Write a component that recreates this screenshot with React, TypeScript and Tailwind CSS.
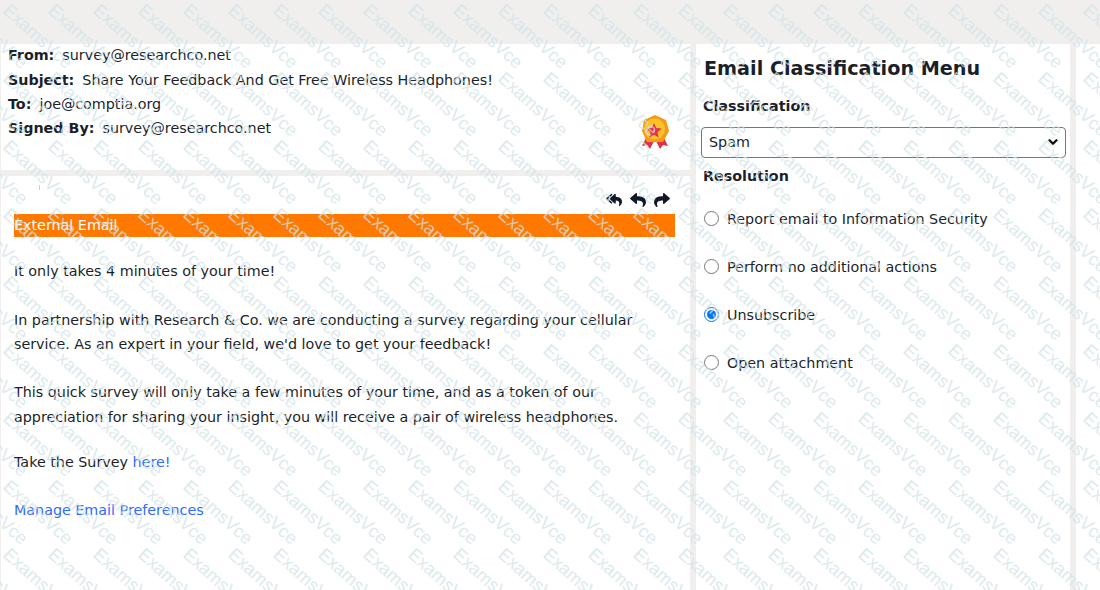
import { FaReply, FaReplyAll, FaShare } from 'react-icons/fa';
import { ChevronDown } from 'lucide-react';

const headers = [
  { label: 'From:', value: 'survey@researchco.net' },
  { label: 'Subject:', value: 'Share Your Feedback And Get Free Wireless Headphones!' },
  { label: 'To:', value: 'joe@comptia.org' },
  { label: 'Signed By:', value: 'survey@researchco.net' },
];

const options = [
  { label: 'Report email to Information Security', checked: false },
  { label: 'Perform no additional actions', checked: false },
  { label: 'Unsubscribe', checked: true },
  { label: 'Open attachment', checked: false },
];

const Medal = () => (
  <svg width="28" height="34" viewBox="0 0 28 34" className="shrink-0">
    <path d="M5 23 L1 31 L6 30 L9 34 L13 26 Z" fill="#e0314b" />
    <path d="M23 23 L27 31 L22 30 L19 34 L15 26 Z" fill="#e0314b" />
    <path d="M14 0 L25 5 L28 16 L22 27 L6 27 L1 16 L3 5 Z" fill="#f59a16" />
    <circle cx="13.5" cy="14" r="10.5" fill="#fdc22a" />
    <path
      d="M13 8 L15.2 13.1 L20.7 13.6 L16.5 17.2 L17.8 22.6 L13 19.8 L8.2 22.6 L9.5 17.2 L5.3 13.6 L10.8 13.1 Z"
      fill="#e8304a"
    />
  </svg>
);

// repeated diagonal stamp that lies over the whole page
const Watermark = () => {
  const marks = [];
  for (let row = 0; row < 11; row++) {
    for (let col = 0; col < 28; col++) {
      const x = col * 45 - 43;
      const y = row * 68 - 56;
      marks.push(
        <text key={`${row}-${col}`} x={x} y={y} transform={`rotate(42 ${x} ${y})`}>
          ExamsVce
        </text>,
      );
    }
  }
  return (
    <svg
      width="1100"
      height="590"
      className="absolute inset-0 pointer-events-none fill-[#d2e3e8] opacity-75 font-['Liberation_Sans',sans-serif] text-[18px]"
    >
      {marks}
    </svg>
  );
};

export default function App() {
  return (
    <div className="relative h-[590px] w-[1100px] overflow-hidden bg-[#f0efee] pt-[44px] font-['DejaVu_Sans',sans-serif] text-[14.3px] text-[#1a1f2b]">
      <div className="flex h-full">
        <div className="flex w-[690px] flex-col gap-[6px] pl-px">
          <div className="flex h-[126px] items-start justify-between bg-white pl-[7px] pr-[21px]">
            <div className="flex flex-col">
              {headers.map((h) => (
                <div key={h.label} className="flex h-[24.3px] items-center gap-[8px]">
                  <b>{h.label}</b>
                  <span>{h.value}</span>
                </div>
              ))}
            </div>
            <div className="pt-[71px]">
              <Medal />
            </div>
          </div>

          <div className="relative flex-1 bg-white pl-[13px] pr-[15px]">
            <span className="absolute left-[38px] top-[9px] h-[5px] w-px bg-[#cfcfcf]" />
            <div className="flex h-[38px] items-end justify-end gap-[8px] pb-[6px] pr-[5px] text-[16px] text-[#111827]">
              <FaReplyAll />
              <FaReply />
              <FaShare />
            </div>
            <div className="flex h-[23px] items-center bg-[#ff7900] text-white">External Email</div>
            <div className="flex flex-col gap-[24px] pt-[22px] leading-[24px]">
              <p>It only takes 4 minutes of your time!</p>
              <p className="mt-px">
                In partnership with Research &amp; Co. we are conducting a survey regarding your cellular
                <br />
                service. As an expert in your field, we'd love to get your feedback!
              </p>
              <p className="leading-[25px]">
                This quick survey will only take a few minutes of your time, and as a token of our
                <br />
                appreciation for sharing your insight, you will receive a pair of wireless headphones.
              </p>
              <p className="-mt-[4px]">
                Take the Survey <a className="text-[#2f6bff]">here!</a>
              </p>
              <p>
                <a className="text-[#2f6bff]">Manage Email Preferences</a>
              </p>
            </div>
          </div>
        </div>

        <div className="ml-[6px] w-[374px] bg-white pl-[5px] pr-[4px]">
          <h1 className="pl-[3px] pt-[10px] text-[19.2px] leading-[30px] font-bold">Email Classification Menu</h1>
          <h2 className="pl-[2px] pt-[10px] text-[14.3px] leading-[24px] font-bold">Classification</h2>
          <div className="relative mt-[9px] h-[31px] w-[365px]">
            <select
              defaultValue="Spam"
              className="h-full w-full appearance-none rounded-[4px] border border-[#767676] pl-[7px] text-[14.3px]"
            >
              <option>Spam</option>
              <option>Ham</option>
            </select>
            <ChevronDown
              size={14}
              strokeWidth={4}
              className="absolute right-[6px] top-[8px] pointer-events-none text-[#111]"
            />
          </div>
          <h2 className="pl-[2px] pt-[6px] text-[14.3px] leading-[24px] font-bold">Resolution</h2>
          <div className="flex flex-col gap-[24px] pt-[20px]">
            {options.map((o) => (
              <label key={o.label} className="flex h-[24px] items-center gap-[8px] pl-[3px]">
                <input
                  type="radio"
                  name="resolution"
                  defaultChecked={o.checked}
                  className="-mt-[3px] h-[15px] w-[15px]"
                />
                {o.label}
              </label>
            ))}
          </div>
        </div>

        <div className="ml-[6px] flex-1 bg-white" />
      </div>
      <Watermark />
    </div>
  );
}
